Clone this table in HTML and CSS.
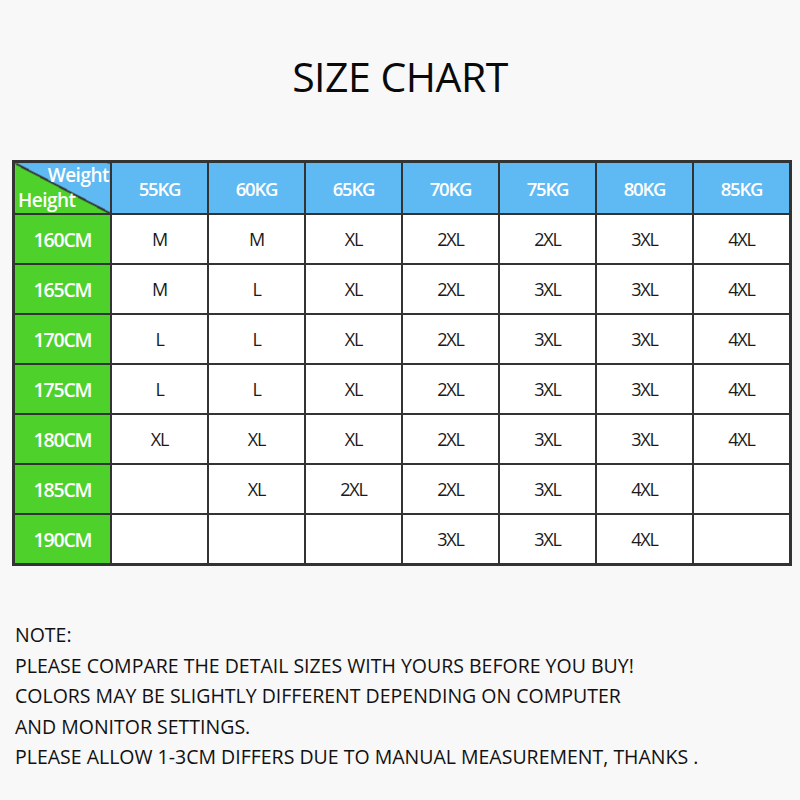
FILE: index.html
```html
<!DOCTYPE html>
<html>
<head>
<meta charset="utf-8">
<link rel="stylesheet" href="styles.css">
</head>
<body>
<h1 class="title">SIZE CHART</h1>
<table class="chart">
  <tr class="head">
    <th class="corner"><span class="w">Weight</span><span class="h">Height</span></th>
    <th>55KG</th><th>60KG</th><th>65KG</th><th>70KG</th><th>75KG</th><th>80KG</th><th>85KG</th>
  </tr>
  <tr><th>160CM</th><td>M</td><td>M</td><td>XL</td><td>2XL</td><td>2XL</td><td>3XL</td><td>4XL</td></tr>
  <tr><th>165CM</th><td>M</td><td>L</td><td>XL</td><td>2XL</td><td>3XL</td><td>3XL</td><td>4XL</td></tr>
  <tr><th>170CM</th><td>L</td><td>L</td><td>XL</td><td>2XL</td><td>3XL</td><td>3XL</td><td>4XL</td></tr>
  <tr><th>175CM</th><td>L</td><td>L</td><td>XL</td><td>2XL</td><td>3XL</td><td>3XL</td><td>4XL</td></tr>
  <tr><th>180CM</th><td>XL</td><td>XL</td><td>XL</td><td>2XL</td><td>3XL</td><td>3XL</td><td>4XL</td></tr>
  <tr><th>185CM</th><td></td><td>XL</td><td>2XL</td><td>2XL</td><td>3XL</td><td>4XL</td><td></td></tr>
  <tr><th>190CM</th><td></td><td></td><td></td><td>3XL</td><td>3XL</td><td>4XL</td><td></td></tr>
</table>
<div class="notes">
  <p>NOTE:</p>
  <p>PLEASE COMPARE THE DETAIL SIZES WITH YOURS BEFORE YOU BUY!</p>
  <p>COLORS MAY BE SLIGHTLY DIFFERENT DEPENDING ON COMPUTER</p>
  <p>AND MONITOR SETTINGS.</p>
  <p>PLEASE ALLOW 1-3CM DIFFERS DUE TO MANUAL MEASUREMENT, THANKS .</p>
</div>
</body>
</html>
```

FILE: styles.css
```css
html, body {
  margin: 0;
  padding: 0;
  background: #f8f8f8;
}
body {
  width: 800px;
  height: 800px;
  font-family: "Open Sans", "Noto Sans", sans-serif;
  color: #111;
}
.title {
  margin: 0;
  padding-top: 51px;
  height: 50px;
  line-height: 50px;
  text-align: center;
  font-weight: 400;
  font-size: 41px;
  letter-spacing: -0.5px;
  color: #0a0a0a;
}
.chart {
  margin: 59px 0 0 12px;
  border-collapse: collapse;
  border: 3px solid #333;
  table-layout: fixed;
  width: 780px;
  font-family: "Open Sans", sans-serif;
}
.chart th, .chart td {
  border: 2px solid #333;
  width: 95px;
  height: 48px;
  padding: 0;
  text-align: center;
  font-size: 18px;
  letter-spacing: -1.2px;
}
.chart tr.head th {
  height: 50px;
  background: #5fb9f2;
  color: #fff;
  font-weight: 600;
  font-size: 18.5px;
}
.chart th {
  background: #4fd12c;
  color: #fff;
  font-weight: 600;
  font-size: 19.5px;
}
.chart td {
  background: #fff;
  color: #1a1a1a;
  font-weight: 400;
}
.chart tr.head th.corner {
  position: relative;
  background: linear-gradient(to bottom left, #5fb9f2 calc(50% - 1px), #333 calc(50% - 1px), #333 calc(50% + 1px), #4fd12c calc(50% + 1px));
  font-size: 19px;
  letter-spacing: -0.5px;
}
.corner .w {
  position: absolute;
  right: 1px;
  top: 1px;
  line-height: 22px;
}
.corner .h {
  position: absolute;
  left: 3px;
  bottom: 2px;
  line-height: 22px;
}
.notes {
  margin: 54px 0 0 15px;
  font-size: 19.5px;
  color: #111;
}
.notes p {
  margin: 0;
  line-height: 30.5px;
}
```
